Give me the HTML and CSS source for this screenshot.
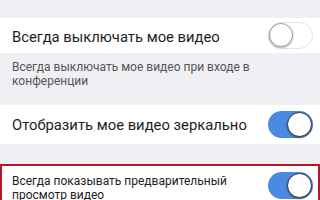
FILE: index.html
```html
<!DOCTYPE html>
<html lang="ru">
<head>
<meta charset="utf-8">
<link rel="stylesheet" href="styles.css">
</head>
<body>
<div class="page">
  <div class="spacer-top"></div>
  <div class="row row-1">
    <span class="label">Всегда выключать мое видео</span>
    <span class="toggle off"><span class="knob"></span></span>
  </div>
  <div class="desc">Всегда выключать мое видео при входе в конференции</div>
  <div class="row row-2">
    <span class="label">Отобразить мое видео зеркально</span>
    <span class="toggle on"><span class="knob"></span></span>
  </div>
  <div class="spacer-mid"></div>
  <div class="row row-3 highlighted">
    <span class="label small">Всегда показывать предварительный просмотр видео</span>
    <span class="toggle on"><span class="knob"></span></span>
  </div>
</div>
</body>
</html>
```
FILE: styles.css
```css
html, body {
  margin: 0;
  padding: 0;
  background: #efeff4;
  font-family: Roboto, "Noto Sans", sans-serif;
  overflow: hidden;
}
.page {
  width: 320px;
  height: 200px;
  overflow: hidden;
  display: flex;
  flex-direction: column;
}
.spacer-top { height: 18px; flex: none; }
.spacer-mid { height: 20px; flex: none; }
.row {
  background: #fff;
  display: flex;
  align-items: center;
  justify-content: space-between;
  padding: 0 7px 0 12px;
  flex: none;
}
.row-1 { height: 35px; }
.row-2 { height: 39px; }
.row-3 {
  height: 48px;
  box-sizing: border-box;
  border: 2px solid #b3172b;
  padding-left: 10px;
  padding-right: 5px;
  align-items: flex-start;
  padding-top: 8px;
}
.label {
  font-size: 14.8px;
  color: #1e1e1e;
}
.row-1 .label { padding-top: 2px; }
.label.small {
  font-size: 12px;
  line-height: 14px;
  width: 240px;
}
.desc {
  height: 52px;
  box-sizing: border-box;
  padding: 7px 60px 0 12px;
  font-size: 12px;
  line-height: 14px;
  color: #555;
  flex: none;
}
.toggle {
  width: 45px;
  height: 27px;
  border-radius: 14px;
  box-sizing: border-box;
  position: relative;
  flex: none;
}
.toggle.off {
  background: #fff;
  border: 1.5px solid #e3e3e6;
}
.toggle.on {
  background: #4a8ae0;
}
.knob {
  position: absolute;
  top: 1px;
  width: 25px;
  height: 25px;
  border-radius: 50%;
  background: #fff;
  box-sizing: border-box;
}
.toggle.off .knob {
  left: 0;
  top: 0;
  width: 24px;
  height: 24px;
  border: 1.5px solid #9a9a9a;
  box-shadow: 0 1px 2px rgba(0,0,0,0.3);
}
.toggle.on .knob {
  right: 1px;
  border: 1px solid #333;
  box-shadow: 0 1px 2px rgba(0,0,0,0.4);
}
.row-3 .toggle { margin-top: -2px; }
```
